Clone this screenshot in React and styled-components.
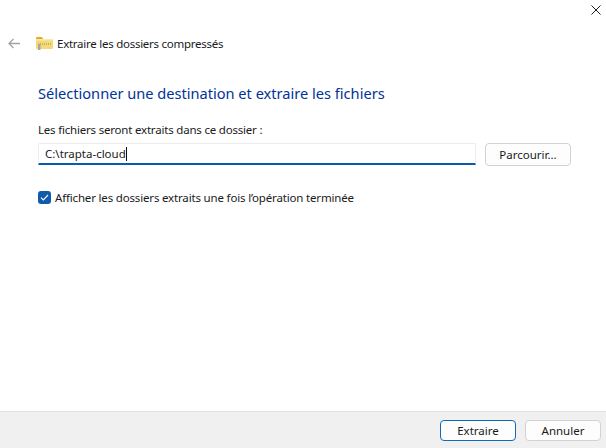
import React from "react";
import styled, { createGlobalStyle } from "styled-components";

const GlobalStyle = createGlobalStyle`
  html, body { margin: 0; padding: 0; background: #fff; }
  body { font-family: "Noto Sans", "Open Sans", sans-serif; font-size: 11.5px; color: #1a1a1a; }
`;

const Dialog = styled.div`
  width: 606px;
  height: 448px;
  display: flex;
  flex-direction: column;
  background: #fff;
  overflow: hidden;
`;

const TitleBar = styled.div`
  height: 20px;
  display: flex;
  justify-content: flex-end;
  padding: 5px 5px 0 0;
`;

const IconButton = styled.button`
  border: 0;
  padding: 0;
  background: none;
  display: flex;
`;

const Header = styled.div`
  display: flex;
  align-items: center;
  gap: 16px;
  height: 20px;
  margin-top: 8px;
  padding-left: 8px;
`;

const TitleGroup = styled.div`
  display: flex;
  align-items: center;
  gap: 4px;
`;

const Title = styled.span`
  font-size: 11.5px;
  letter-spacing: -0.26px;
`;

const Content = styled.main`
  flex: 1;
  padding: 29px 35px 0 38px;
  display: flex;
  flex-direction: column;
`;

const Heading = styled.h1`
  margin: 0;
  font-size: 14.6px;
  line-height: 22px;
  font-weight: 400;
  color: #003399;
`;

const Label = styled.label`
  display: block;
  margin-top: 18px;
  line-height: 16px;
  letter-spacing: -0.2px;
`;

const PathRow = styled.div`
  display: flex;
  gap: 9px;
  margin-top: 5px;
`;

const PathBox = styled.div`
  flex: 1;
  height: 22px;
  display: flex;
  align-items: center;
  padding: 0 6px;
  border: 1px solid #ececec;
  border-bottom: 2px solid #0b5cab;
  border-radius: 2px 2px 0 0;
  box-sizing: border-box;
`;

const Caret = styled.span`
  width: 1px;
  height: 14px;
  background: #111;
`;

const Button = styled.button`
  width: ${(p) => p.$width}px;
  height: ${(p) => p.$height}px;
  padding: 0;
  font: inherit;
  color: #1a1a1a;
  background: #fdfdfd;
  border: 1px solid ${(p) => (p.$primary ? "#0f6cbd" : "#d2d2d2")};
  border-radius: 4px;
`;

const CheckRow = styled.div`
  display: flex;
  align-items: center;
  gap: 4px;
  margin-top: 24px;
  letter-spacing: -0.17px;
`;

const CheckBox = styled.span`
  width: 13px;
  height: 13px;
  border-radius: 3px;
  background: #0f5cad;
  display: flex;
  align-items: center;
  justify-content: center;
`;

const Footer = styled.footer`
  height: 37px;
  display: flex;
  justify-content: flex-end;
  gap: 9px;
  padding: 8px 5px 0 0;
  box-sizing: border-box;
  background: #f0f0f0;
  border-top: 1px solid #e2e2e2;
`;

const FolderIcon = () => (
  <svg width="17" height="16" viewBox="0 0 17 16">
    <path d="M0 3.5C0 2.5.5 2 1.5 2h4l2 2H0z" fill="#e5a91e" />
    <rect x="0" y="4" width="17" height="10" rx="1" fill="#f6d875" />
    <rect x="0" y="4" width="17" height="1.5" fill="#fbe9a8" />
    <path d="M2 9h14" stroke="#8a8a7a" strokeWidth="1.2" strokeDasharray="1 1" />
    <rect x="2" y="9" width="2.5" height="6" fill="#a9a9a0" />
  </svg>
);

export default function App() {
  return (
    <Dialog>
      <GlobalStyle />
      <TitleBar>
        <IconButton aria-label="Fermer">
          <svg width="10" height="10" viewBox="0 0 10 10">
            <path d="M.5.5l9 9M9.5.5l-9 9" stroke="#1a1a1a" strokeWidth="1" />
          </svg>
        </IconButton>
      </TitleBar>
      <Header>
        <IconButton aria-label="Retour">
          <svg width="12" height="11" viewBox="0 0 12 11">
            <path d="M12 5.5H1M5.5 1 1 5.5 5.5 10" fill="none" stroke="#a3a3a3" strokeWidth="1.3" />
          </svg>
        </IconButton>
        <TitleGroup>
          <FolderIcon />
          <Title>Extraire les dossiers compressés</Title>
        </TitleGroup>
      </Header>
      <Content>
        <Heading>Sélectionner une destination et extraire les fichiers</Heading>
        <Label>Les fichiers seront extraits dans ce dossier :</Label>
        <PathRow>
          <PathBox>
            C:\trapta-cloud
            <Caret />
          </PathBox>
          <Button $width={86} $height={23}>Parcourir...</Button>
        </PathRow>
        <CheckRow>
          <CheckBox>
            <svg width="9" height="9" viewBox="0 0 9 9">
              <path d="M1 4.7l2.3 2.3L8 2" fill="none" stroke="#fff" strokeWidth="1.1" />
            </svg>
          </CheckBox>
          Afficher les dossiers extraits une fois l’opération terminée
        </CheckRow>
      </Content>
      <Footer>
        <Button $primary $width={76} $height={21}>Extraire</Button>
        <Button $width={76} $height={21}>Annuler</Button>
      </Footer>
    </Dialog>
  );
}
